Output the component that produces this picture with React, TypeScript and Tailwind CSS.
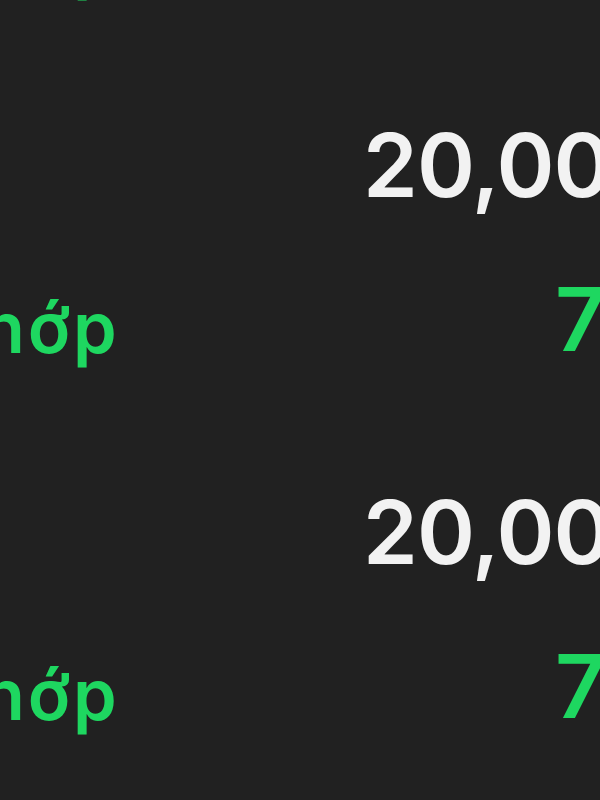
import React from "react";

const rows = [
  { amount: "20,000", label: "Khớp", value: "75,000" },
  { amount: "20,000", label: "Khớp", value: "75,000" },
  { amount: "20,000", label: "Khớp", value: "75,000" },
];

function Row({ amount, label, value }: { amount: string; label: string; value: string }) {
  return (
    <div className="flex flex-col pb-[125px]">
      <div className="h-[88px] pl-[363px] whitespace-nowrap text-[88px] leading-none font-semibold tracking-[-0.01em] text-[#f2f2f2]">
        {amount}
      </div>
      <div className="mt-[66px] h-[88px] grid grid-cols-[555px_auto] items-end whitespace-nowrap">
        <span className="-ml-[70px] text-[70px] leading-none font-semibold tracking-[0.04em] text-[#1ed760]">
          {label}
        </span>
        <span className="text-[88px] leading-none font-semibold text-[#1ed760]">{value}</span>
      </div>
    </div>
  );
}

export default function App() {
  return (
    <div
      className="w-[600px] h-[800px] overflow-hidden bg-[#212121]"
      style={{ fontFamily: "Inter, 'Noto Sans', sans-serif" }}
    >
      <div className="-mt-[246px] flex flex-col">
        {rows.map((r, i) => (
          <Row key={i} {...r} />
        ))}
      </div>
    </div>
  );
}
